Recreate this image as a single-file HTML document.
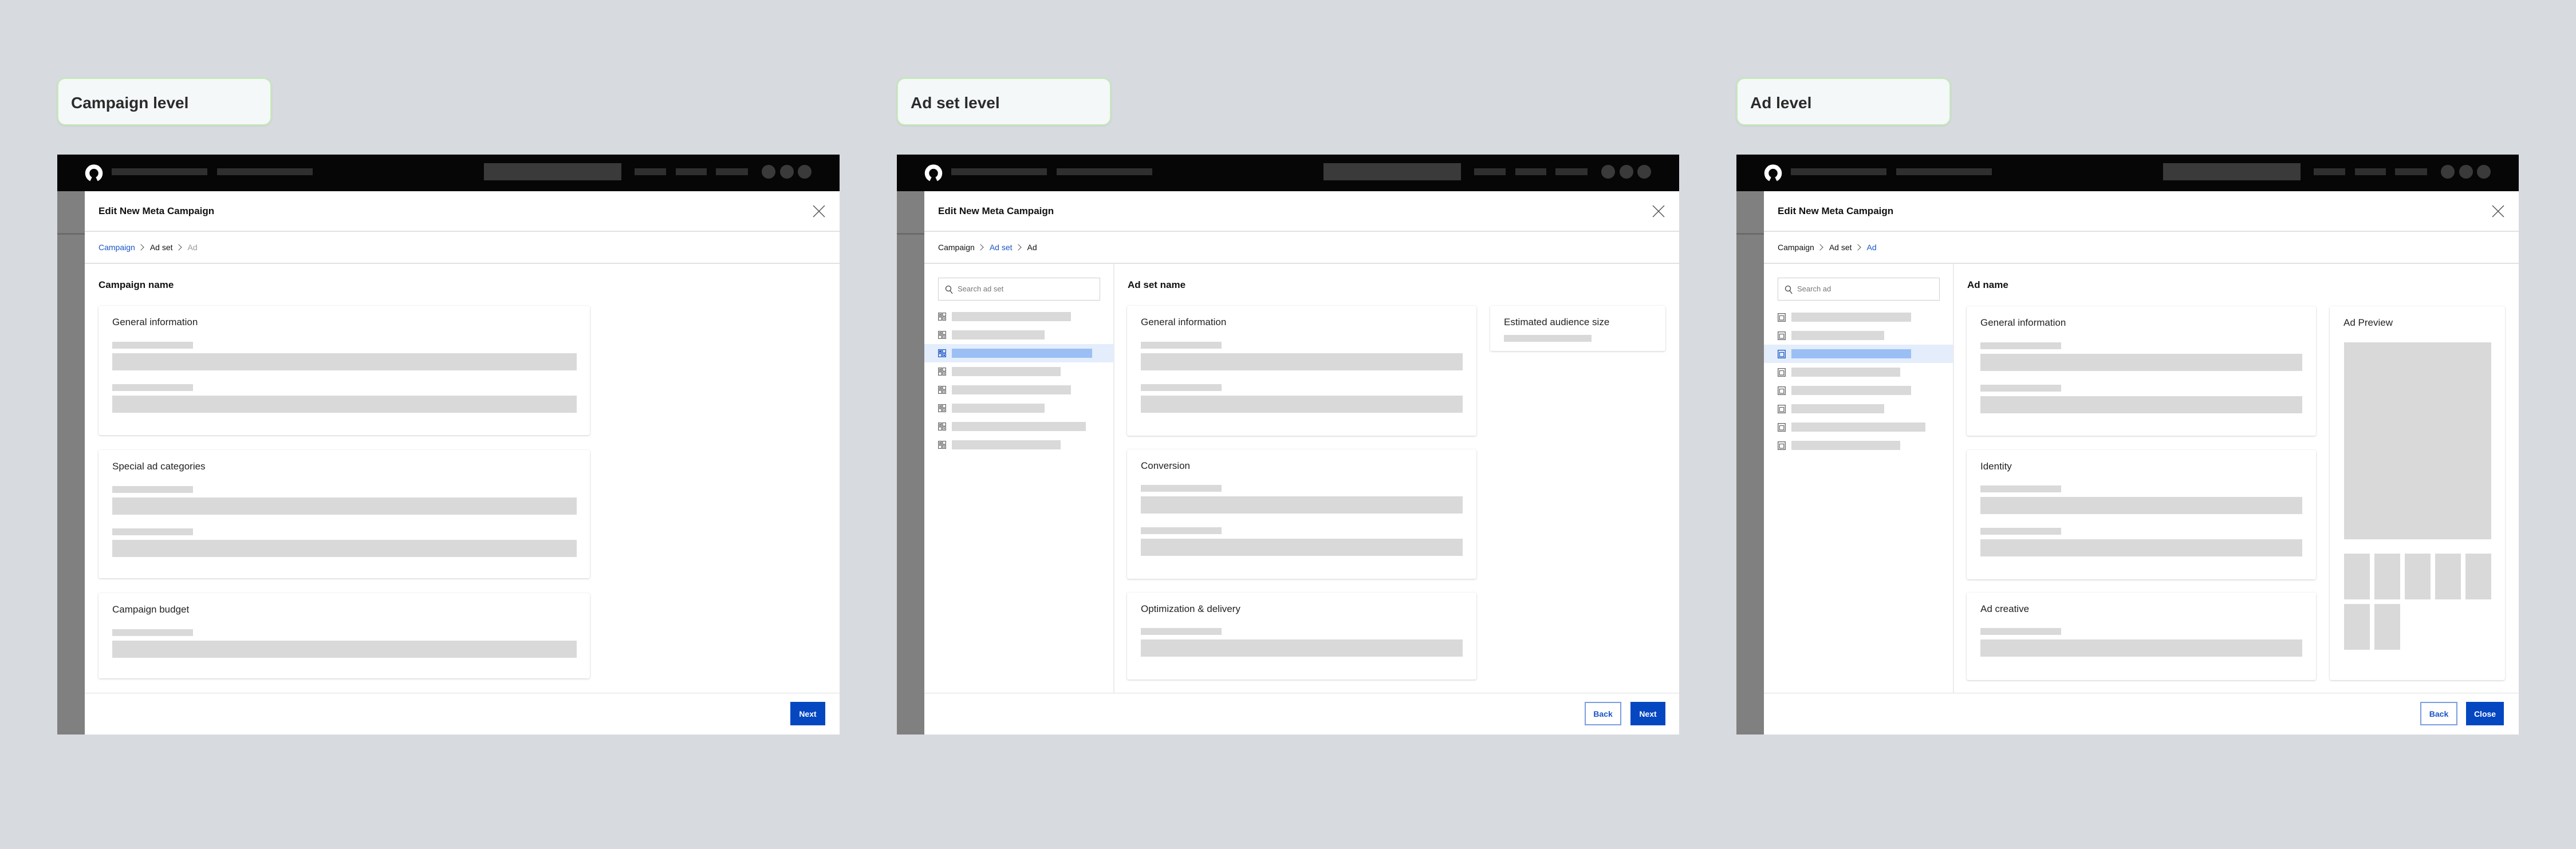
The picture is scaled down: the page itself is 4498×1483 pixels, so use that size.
<!DOCTYPE html>
<html><head><meta charset="utf-8">
<style>
*{margin:0;padding:0;box-sizing:border-box}
body{width:4498px;height:1483px;background:#d7dadf;position:relative;overflow:hidden;font-family:"Liberation Sans",sans-serif;color:#111}
.abs{position:absolute}
.lbl{position:absolute;top:136px;width:374px;height:83px;background:#f4f8f8;border:2px solid #c4ecb4;border-radius:14px;box-shadow:0 1px 3px rgba(0,0,0,.08)}
.lbl span{position:absolute;left:22px;top:26px;font-size:28px;font-weight:bold;color:#2b2b2b}
.frame{position:absolute;top:270px;width:1366px;height:1013px;background:#fff;overflow:hidden}
.nav{position:absolute;left:0;top:0;width:1366px;height:64px;background:#060606}
.nb{position:absolute;background:#2f2f2f;height:12px;top:24px}
.circ{position:absolute;top:18px;width:24px;height:24px;border-radius:50%;background:#3a3a3a}
.strip{position:absolute;left:0;top:64px;width:48px;height:949px;background:#808080}
.strip i{position:absolute;left:0;top:73px;width:48px;height:3px;background:#6a6a6a}
.mtitle{position:absolute;left:72px;top:89px;font-size:17px;font-weight:bold;line-height:20px}
.hr{position:absolute;left:48px;width:1318px;height:2px;background:#e2e2e2}
.bc{position:absolute;left:72px;top:153px;font-size:14px;line-height:18px;color:#111;white-space:nowrap}
.bc .on{color:#1a55c6}.bc .off{color:#9a9a9a}
.bc .ch{display:inline-block;width:8px;height:8px;border-right:1.3px solid #555;border-top:1.3px solid #555;transform:rotate(45deg);margin:0 12px 1px 6px}
.sec{position:absolute;top:218px;font-size:17px;font-weight:bold;line-height:20px}
.card{position:absolute;background:#fff;border-radius:3px;box-shadow:0 1px 3px rgba(0,0,0,.18),0 0 1px rgba(0,0,0,.08)}
.card .t{position:absolute;left:24px;top:19px;font-size:17px;line-height:20px;color:#222}
.ph{position:absolute;background:#d9d9d9}
.foot{position:absolute;left:48px;top:940px;width:1318px;height:2px;background:#f0f0f0;box-shadow:0 -1px 2px rgba(0,0,0,.03)}
.btn{position:absolute;top:956px;height:41px;font-size:14px;font-weight:bold;display:flex;align-items:center;justify-content:center}
.bp{background:#0447c0;color:#fff}
.bs{background:#fff;border:2px solid #7b9de0;color:#1a55c6}
.vline{position:absolute;left:378px;top:191px;width:2px;height:750px;background:#ececec}
.search{position:absolute;left:72px;top:215px;width:283px;height:40px;border:1.5px solid #cfcfcf;font-size:13px;color:#777}
.search span{position:absolute;left:33px;top:11px}
.search svg{position:absolute;left:11px;top:12px}
.row{position:absolute;left:48px;width:330px;height:32px}
.row.sel{background:#e3edfb}
.row .b{position:absolute;left:48px;top:8px;height:16px;background:#d9d9d9}
.row.sel .b{background:#9bbff5}
.row svg{position:absolute;left:24px;top:9px}
</style></head><body>

<div class="lbl" style="left:100px"><span>Campaign level</span></div>
<div class="lbl" style="left:1566px"><span>Ad set level</span></div>
<div class="lbl" style="left:3032px"><span>Ad level</span></div>

<!-- FRAME 1 -->
<div class="frame" style="left:100px">
 <div class="nav">
  <svg class="abs" style="left:47px;top:14px" width="34" height="34" viewBox="0 0 34 34"><path d="M12 29 A11.5 11.5 0 1 1 22 29" fill="none" stroke="#fff" stroke-width="7.5"/></svg>
  <div class="nb" style="left:95px;width:167px"></div><div class="nb" style="left:279px;width:167px"></div>
  <div class="nb" style="left:745px;width:240px;height:30px;top:15px;background:#3a3a3a"></div>
  <div class="nb" style="left:1008px;width:55px"></div><div class="nb" style="left:1080px;width:54px"></div><div class="nb" style="left:1150px;width:56px"></div>
  <div class="circ" style="left:1230px"></div><div class="circ" style="left:1262px"></div><div class="circ" style="left:1293px"></div>
 </div>
 <div class="strip"><i></i></div>
 <div class="mtitle">Edit New Meta Campaign</div>
 <svg class="abs" style="left:1319px;top:88px" width="22" height="22" viewBox="0 0 22 22"><path d="M1 1L21 21M21 1L1 21" stroke="#555" stroke-width="1.5"/></svg>
 <div class="hr" style="top:133px"></div>
 <div class="bc"><span class="on">Campaign</span><span class="ch"></span>Ad set<span class="ch"></span><span class="off">Ad</span></div>
 <div class="hr" style="top:189px"></div>
 <div class="sec" style="left:72px">Campaign name</div>
 <div class="card" style="left:72px;top:264px;width:858px;height:226px"><div class="t">General information</div>
  <div class="ph" style="left:24px;top:63px;width:141px;height:12px"></div><div class="ph" style="left:24px;top:83px;width:811px;height:30px"></div>
  <div class="ph" style="left:24px;top:137px;width:141px;height:12px"></div><div class="ph" style="left:24px;top:157px;width:811px;height:30px"></div></div>
 <div class="card" style="left:72px;top:516px;width:858px;height:224px"><div class="t">Special ad categories</div>
  <div class="ph" style="left:24px;top:63px;width:141px;height:12px"></div><div class="ph" style="left:24px;top:83px;width:811px;height:30px"></div>
  <div class="ph" style="left:24px;top:137px;width:141px;height:12px"></div><div class="ph" style="left:24px;top:157px;width:811px;height:30px"></div></div>
 <div class="card" style="left:72px;top:766px;width:858px;height:149px"><div class="t">Campaign budget</div>
  <div class="ph" style="left:24px;top:63px;width:141px;height:12px"></div><div class="ph" style="left:24px;top:83px;width:811px;height:30px"></div></div>
 <div class="foot"></div>
 <div class="btn bp" style="left:1280px;width:61px">Next</div>
</div>

<!-- FRAME 2 -->
<div class="frame" style="left:1566px">
 <div class="nav">
  <svg class="abs" style="left:47px;top:14px" width="34" height="34" viewBox="0 0 34 34"><path d="M12 29 A11.5 11.5 0 1 1 22 29" fill="none" stroke="#fff" stroke-width="7.5"/></svg>
  <div class="nb" style="left:95px;width:167px"></div><div class="nb" style="left:279px;width:167px"></div>
  <div class="nb" style="left:745px;width:240px;height:30px;top:15px;background:#3a3a3a"></div>
  <div class="nb" style="left:1008px;width:55px"></div><div class="nb" style="left:1080px;width:54px"></div><div class="nb" style="left:1150px;width:56px"></div>
  <div class="circ" style="left:1230px"></div><div class="circ" style="left:1262px"></div><div class="circ" style="left:1293px"></div>
 </div>
 <div class="strip"><i></i></div>
 <div class="mtitle">Edit New Meta Campaign</div>
 <svg class="abs" style="left:1319px;top:88px" width="22" height="22" viewBox="0 0 22 22"><path d="M1 1L21 21M21 1L1 21" stroke="#555" stroke-width="1.5"/></svg>
 <div class="hr" style="top:133px"></div>
 <div class="bc">Campaign<span class="ch"></span><span class="on">Ad set</span><span class="ch"></span>Ad</div>
 <div class="hr" style="top:189px"></div>
 <div class="vline"></div>
 <div class="search"><svg width="14" height="16" viewBox="0 0 14 16"><circle cx="6" cy="6" r="4.5" fill="none" stroke="#444" stroke-width="1.3"/><path d="M9 9.5L13 15" stroke="#444" stroke-width="1.3"/></svg><span>Search ad set</span></div>
 <div class="row" style="top:267px"><svg width="14" height="14" viewBox="0 0 14 14"><g fill="none" stroke="#666" stroke-width="1.2"><rect x=".6" y=".6" width="5.5" height="5.5"/><rect x="7.9" y=".6" width="5.5" height="5.5"/><rect x=".6" y="7.9" width="5.5" height="5.5"/><rect x="7.9" y="7.9" width="5.5" height="5.5"/></g><rect x="2" y="2" width="3" height="3" fill="#888"/><rect x="9.5" y="9.5" width="2.5" height="2.5" fill="#888"/></svg><div class="b" style="width:208px"></div></div>
 <div class="row" style="top:299px"><svg width="14" height="14" viewBox="0 0 14 14"><g fill="none" stroke="#666" stroke-width="1.2"><rect x=".6" y=".6" width="5.5" height="5.5"/><rect x="7.9" y=".6" width="5.5" height="5.5"/><rect x=".6" y="7.9" width="5.5" height="5.5"/><rect x="7.9" y="7.9" width="5.5" height="5.5"/></g><rect x="2" y="2" width="3" height="3" fill="#888"/><rect x="9.5" y="9.5" width="2.5" height="2.5" fill="#888"/></svg><div class="b" style="width:162px"></div></div>
 <div class="row sel" style="top:331px"><svg width="14" height="14" viewBox="0 0 14 14"><g fill="none" stroke="#1a55c6" stroke-width="1.2"><rect x=".6" y=".6" width="5.5" height="5.5"/><rect x="7.9" y=".6" width="5.5" height="5.5"/><rect x=".6" y="7.9" width="5.5" height="5.5"/><rect x="7.9" y="7.9" width="5.5" height="5.5"/></g><rect x="2" y="2" width="3" height="3" fill="#1a55c6"/><rect x="9.5" y="9.5" width="2.5" height="2.5" fill="#1a55c6"/></svg><div class="b" style="width:245px"></div></div>
 <div class="row" style="top:363px"><svg width="14" height="14" viewBox="0 0 14 14"><g fill="none" stroke="#666" stroke-width="1.2"><rect x=".6" y=".6" width="5.5" height="5.5"/><rect x="7.9" y=".6" width="5.5" height="5.5"/><rect x=".6" y="7.9" width="5.5" height="5.5"/><rect x="7.9" y="7.9" width="5.5" height="5.5"/></g><rect x="2" y="2" width="3" height="3" fill="#888"/><rect x="9.5" y="9.5" width="2.5" height="2.5" fill="#888"/></svg><div class="b" style="width:190px"></div></div>
 <div class="row" style="top:395px"><svg width="14" height="14" viewBox="0 0 14 14"><g fill="none" stroke="#666" stroke-width="1.2"><rect x=".6" y=".6" width="5.5" height="5.5"/><rect x="7.9" y=".6" width="5.5" height="5.5"/><rect x=".6" y="7.9" width="5.5" height="5.5"/><rect x="7.9" y="7.9" width="5.5" height="5.5"/></g><rect x="2" y="2" width="3" height="3" fill="#888"/><rect x="9.5" y="9.5" width="2.5" height="2.5" fill="#888"/></svg><div class="b" style="width:208px"></div></div>
 <div class="row" style="top:427px"><svg width="14" height="14" viewBox="0 0 14 14"><g fill="none" stroke="#666" stroke-width="1.2"><rect x=".6" y=".6" width="5.5" height="5.5"/><rect x="7.9" y=".6" width="5.5" height="5.5"/><rect x=".6" y="7.9" width="5.5" height="5.5"/><rect x="7.9" y="7.9" width="5.5" height="5.5"/></g><rect x="2" y="2" width="3" height="3" fill="#888"/><rect x="9.5" y="9.5" width="2.5" height="2.5" fill="#888"/></svg><div class="b" style="width:162px"></div></div>
 <div class="row" style="top:459px"><svg width="14" height="14" viewBox="0 0 14 14"><g fill="none" stroke="#666" stroke-width="1.2"><rect x=".6" y=".6" width="5.5" height="5.5"/><rect x="7.9" y=".6" width="5.5" height="5.5"/><rect x=".6" y="7.9" width="5.5" height="5.5"/><rect x="7.9" y="7.9" width="5.5" height="5.5"/></g><rect x="2" y="2" width="3" height="3" fill="#888"/><rect x="9.5" y="9.5" width="2.5" height="2.5" fill="#888"/></svg><div class="b" style="width:234px"></div></div>
 <div class="row" style="top:491px"><svg width="14" height="14" viewBox="0 0 14 14"><g fill="none" stroke="#666" stroke-width="1.2"><rect x=".6" y=".6" width="5.5" height="5.5"/><rect x="7.9" y=".6" width="5.5" height="5.5"/><rect x=".6" y="7.9" width="5.5" height="5.5"/><rect x="7.9" y="7.9" width="5.5" height="5.5"/></g><rect x="2" y="2" width="3" height="3" fill="#888"/><rect x="9.5" y="9.5" width="2.5" height="2.5" fill="#888"/></svg><div class="b" style="width:190px"></div></div>
 <div class="sec" style="left:403px">Ad set name</div>
 <div class="card" style="left:402px;top:264px;width:610px;height:227px"><div class="t">General information</div>
  <div class="ph" style="left:24px;top:63px;width:141px;height:12px"></div><div class="ph" style="left:24px;top:83px;width:562px;height:30px"></div>
  <div class="ph" style="left:24px;top:137px;width:141px;height:12px"></div><div class="ph" style="left:24px;top:157px;width:562px;height:30px"></div></div>
 <div class="card" style="left:402px;top:515px;width:610px;height:226px"><div class="t">Conversion</div>
  <div class="ph" style="left:24px;top:62px;width:141px;height:12px"></div><div class="ph" style="left:24px;top:82px;width:562px;height:30px"></div>
  <div class="ph" style="left:24px;top:136px;width:141px;height:12px"></div><div class="ph" style="left:24px;top:156px;width:562px;height:30px"></div></div>
 <div class="card" style="left:402px;top:765px;width:610px;height:152px"><div class="t">Optimization &amp; delivery</div>
  <div class="ph" style="left:24px;top:62px;width:141px;height:12px"></div><div class="ph" style="left:24px;top:82px;width:562px;height:30px"></div></div>
 <div class="card" style="left:1036px;top:264px;width:306px;height:79px"><div class="t">Estimated audience size</div>
  <div class="ph" style="left:24px;top:51px;width:153px;height:12px"></div></div>
 <div class="foot"></div>
 <div class="btn bs" style="left:1201px;width:64px">Back</div>
 <div class="btn bp" style="left:1281px;width:61px">Next</div>
</div>

<!-- FRAME 3 -->
<div class="frame" style="left:3032px">
 <div class="nav">
  <svg class="abs" style="left:47px;top:14px" width="34" height="34" viewBox="0 0 34 34"><path d="M12 29 A11.5 11.5 0 1 1 22 29" fill="none" stroke="#fff" stroke-width="7.5"/></svg>
  <div class="nb" style="left:95px;width:167px"></div><div class="nb" style="left:279px;width:167px"></div>
  <div class="nb" style="left:745px;width:240px;height:30px;top:15px;background:#3a3a3a"></div>
  <div class="nb" style="left:1008px;width:55px"></div><div class="nb" style="left:1080px;width:54px"></div><div class="nb" style="left:1150px;width:56px"></div>
  <div class="circ" style="left:1230px"></div><div class="circ" style="left:1262px"></div><div class="circ" style="left:1293px"></div>
 </div>
 <div class="strip"><i></i></div>
 <div class="mtitle">Edit New Meta Campaign</div>
 <svg class="abs" style="left:1319px;top:88px" width="22" height="22" viewBox="0 0 22 22"><path d="M1 1L21 21M21 1L1 21" stroke="#555" stroke-width="1.5"/></svg>
 <div class="hr" style="top:133px"></div>
 <div class="bc">Campaign<span class="ch"></span>Ad set<span class="ch"></span><span class="on">Ad</span></div>
 <div class="hr" style="top:189px"></div>
 <div class="vline"></div>
 <div class="search"><svg width="14" height="16" viewBox="0 0 14 16"><circle cx="6" cy="6" r="4.5" fill="none" stroke="#444" stroke-width="1.3"/><path d="M9 9.5L13 15" stroke="#444" stroke-width="1.3"/></svg><span>Search ad</span></div>
 <div class="row" style="top:268px"><svg width="14" height="15" viewBox="0 0 14 15"><rect x=".7" y=".7" width="12.6" height="13.6" fill="none" stroke="#666" stroke-width="1.3"/><rect x="3.2" y="4.5" width="7.6" height="7.5" fill="none" stroke="#666" stroke-width="1.2"/></svg><div class="b" style="width:209px"></div></div>
 <div class="row" style="top:300px"><svg width="14" height="15" viewBox="0 0 14 15"><rect x=".7" y=".7" width="12.6" height="13.6" fill="none" stroke="#666" stroke-width="1.3"/><rect x="3.2" y="4.5" width="7.6" height="7.5" fill="none" stroke="#666" stroke-width="1.2"/></svg><div class="b" style="width:162px"></div></div>
 <div class="row sel" style="top:332px"><svg width="14" height="15" viewBox="0 0 14 15"><rect x=".7" y=".7" width="12.6" height="13.6" fill="none" stroke="#1a55c6" stroke-width="1.3"/><rect x="3.2" y="4.5" width="7.6" height="7.5" fill="none" stroke="#1a55c6" stroke-width="1.2"/></svg><div class="b" style="width:209px"></div></div>
 <div class="row" style="top:364px"><svg width="14" height="15" viewBox="0 0 14 15"><rect x=".7" y=".7" width="12.6" height="13.6" fill="none" stroke="#666" stroke-width="1.3"/><rect x="3.2" y="4.5" width="7.6" height="7.5" fill="none" stroke="#666" stroke-width="1.2"/></svg><div class="b" style="width:190px"></div></div>
 <div class="row" style="top:396px"><svg width="14" height="15" viewBox="0 0 14 15"><rect x=".7" y=".7" width="12.6" height="13.6" fill="none" stroke="#666" stroke-width="1.3"/><rect x="3.2" y="4.5" width="7.6" height="7.5" fill="none" stroke="#666" stroke-width="1.2"/></svg><div class="b" style="width:209px"></div></div>
 <div class="row" style="top:428px"><svg width="14" height="15" viewBox="0 0 14 15"><rect x=".7" y=".7" width="12.6" height="13.6" fill="none" stroke="#666" stroke-width="1.3"/><rect x="3.2" y="4.5" width="7.6" height="7.5" fill="none" stroke="#666" stroke-width="1.2"/></svg><div class="b" style="width:162px"></div></div>
 <div class="row" style="top:460px"><svg width="14" height="15" viewBox="0 0 14 15"><rect x=".7" y=".7" width="12.6" height="13.6" fill="none" stroke="#666" stroke-width="1.3"/><rect x="3.2" y="4.5" width="7.6" height="7.5" fill="none" stroke="#666" stroke-width="1.2"/></svg><div class="b" style="width:234px"></div></div>
 <div class="row" style="top:492px"><svg width="14" height="15" viewBox="0 0 14 15"><rect x=".7" y=".7" width="12.6" height="13.6" fill="none" stroke="#666" stroke-width="1.3"/><rect x="3.2" y="4.5" width="7.6" height="7.5" fill="none" stroke="#666" stroke-width="1.2"/></svg><div class="b" style="width:190px"></div></div>
 <div class="sec" style="left:403px">Ad name</div>
 <div class="card" style="left:402px;top:265px;width:610px;height:226px"><div class="t">General information</div>
  <div class="ph" style="left:24px;top:63px;width:141px;height:12px"></div><div class="ph" style="left:24px;top:83px;width:562px;height:30px"></div>
  <div class="ph" style="left:24px;top:137px;width:141px;height:12px"></div><div class="ph" style="left:24px;top:157px;width:562px;height:30px"></div></div>
 <div class="card" style="left:402px;top:516px;width:610px;height:226px"><div class="t">Identity</div>
  <div class="ph" style="left:24px;top:62px;width:141px;height:12px"></div><div class="ph" style="left:24px;top:82px;width:562px;height:30px"></div>
  <div class="ph" style="left:24px;top:136px;width:141px;height:12px"></div><div class="ph" style="left:24px;top:156px;width:562px;height:30px"></div></div>
 <div class="card" style="left:402px;top:765px;width:610px;height:153px"><div class="t">Ad creative</div>
  <div class="ph" style="left:24px;top:62px;width:141px;height:12px"></div><div class="ph" style="left:24px;top:82px;width:562px;height:30px"></div></div>
 <div class="card" style="left:1036px;top:265px;width:306px;height:653px"><div class="t">Ad Preview</div>
  <div class="ph" style="left:25px;top:63px;width:257px;height:344px"></div>
  <div class="ph" style="left:25px;top:432px;width:45px;height:80px"></div>
  <div class="ph" style="left:78px;top:432px;width:45px;height:80px"></div>
  <div class="ph" style="left:131px;top:432px;width:45px;height:80px"></div>
  <div class="ph" style="left:184px;top:432px;width:45px;height:80px"></div>
  <div class="ph" style="left:237px;top:432px;width:45px;height:80px"></div>
  <div class="ph" style="left:25px;top:520px;width:45px;height:80px"></div>
  <div class="ph" style="left:78px;top:520px;width:45px;height:80px"></div>
 </div>
 <div class="foot"></div>
 <div class="btn bs" style="left:1194px;width:65px">Back</div>
 <div class="btn bp" style="left:1274px;width:66px">Close</div>
</div>

</body></html>
